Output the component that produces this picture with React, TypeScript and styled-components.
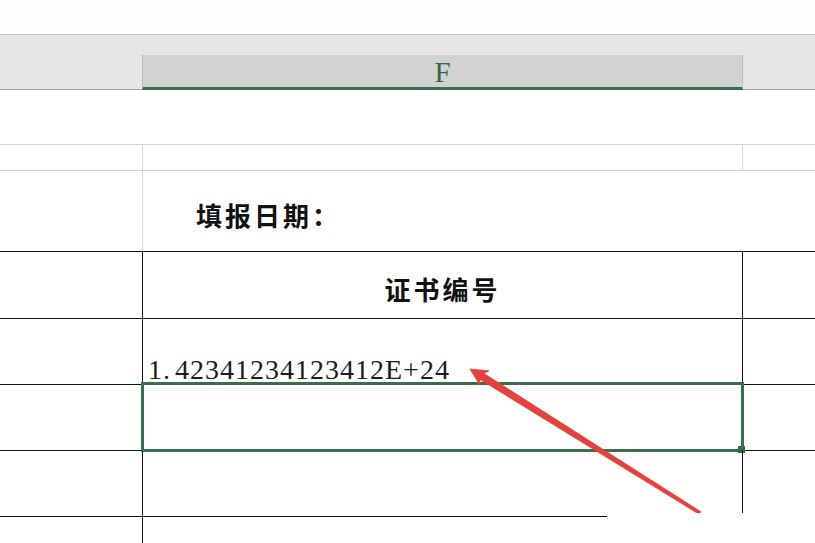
import React from "react";
import styled, { createGlobalStyle } from "styled-components";

const GlobalStyle = createGlobalStyle`
  html, body {
    margin: 0;
    padding: 0;
    background: #ffffff;
    overflow: hidden;
  }
`;

const LIGHT = "#d3d3d3";
const DARK = "#111111";
const GREEN = "#3c6d4f";

type Edge = "none" | "light" | "dark";
const edgeColor = (e: Edge) => (e === "dark" ? DARK : e === "light" ? LIGHT : "transparent");

const Sheet = styled.div`
  position: relative;
  width: 815px;
  height: 543px;
  overflow: hidden;
  background: #ffffff;
`;

const Ribbon = styled.div`
  height: 34px;
  background: #fdfdfd;
  border-bottom: 1px solid #c7c7c7;
`;

const HeaderBand = styled.div`
  display: grid;
  grid-template-columns: 142px 601px 1fr;
  height: 55px;
  background: #e6e6e6;
`;

const HeaderBlank = styled.div`
  border-bottom: 1px solid #a3a3a3;
`;

const ColumnHeader = styled.div`
  margin-top: 20px;
  box-sizing: border-box;
  background: #d2d2d2;
  border-left: 1px solid #bcbcbc;
  border-right: 1px solid #bcbcbc;
  border-bottom: 3px solid ${GREEN};
  display: flex;
  align-items: center;
  justify-content: center;
  font-family: "Liberation Serif", serif;
  font-size: 29px;
  line-height: 1;
  color: #3a6449;
  padding-top: 2px;
`;

const Row = styled.div<{ $h: number; $line: Edge }>`
  display: grid;
  grid-template-columns: 143px 600px 1fr;
  box-sizing: border-box;
  height: ${(p) => p.$h}px;
  border-bottom: 1px solid ${(p) => edgeColor(p.$line)};
`;

const Cell = styled.div<{ $edge?: Edge; $span?: number }>`
  position: relative;
  box-sizing: border-box;
  display: flex;
  min-width: 0;
  border-right: 1px solid ${(p) => edgeColor(p.$edge ?? "none")};
  grid-column: span ${(p) => p.$span ?? 1};
`;

const Label = styled.div<{ $center?: boolean; $indent?: number; $drop?: number }>`
  flex: 1;
  display: flex;
  align-items: center;
  justify-content: ${(p) => (p.$center ? "center" : "flex-start")};
  padding-left: ${(p) => p.$indent ?? 0}px;
  padding-top: ${(p) => p.$drop ?? 0}px;
  font-family: "Noto Sans CJK SC", "Noto Sans", sans-serif;
  font-weight: 700;
  font-size: 26px;
  letter-spacing: 3px;
  color: #111111;
`;

const NumberText = styled.div`
  align-self: flex-end;
  padding-left: 5px;
  font-family: "Liberation Serif", serif;
  font-size: 28px;
  line-height: 1;
  letter-spacing: 1px;
  color: #1c1c1c;
  white-space: nowrap;
`;

const Dot = styled.span`
  margin-right: 4px;
`;

const Selection = styled.div`
  position: absolute;
  top: -3px;
  left: -2px;
  right: -2px;
  bottom: -2px;
  border: 3px solid ${GREEN};
  pointer-events: none;
`;

const FillHandle = styled.div`
  position: absolute;
  right: -4px;
  bottom: -4px;
  width: 7px;
  height: 7px;
  background: #2f6a47;
`;

const Annotation = styled.svg`
  position: absolute;
  left: 0;
  top: 0;
  pointer-events: none;
`;

const Stamp = styled.div`
  position: absolute;
  left: 607px;
  top: 513px;
  width: 208px;
  height: 30px;
  background: #ffffff;
`;

export default function App() {
  return (
    <>
      <GlobalStyle />
      <Sheet>
        <Ribbon />
        <HeaderBand>
          <HeaderBlank />
          <ColumnHeader>F</ColumnHeader>
          <HeaderBlank />
        </HeaderBand>

        <Row $h={55} $line="light">
          <Cell />
          <Cell />
          <Cell />
        </Row>
        <Row $h={26} $line="light">
          <Cell $edge="light" />
          <Cell $edge="light" />
          <Cell />
        </Row>
        <Row $h={81} $line="dark">
          <Cell $edge="light" />
          <Cell $span={2}>
            <Label $indent={53} $drop={6}>填报日期：</Label>
          </Cell>
        </Row>
        <Row $h={67} $line="dark">
          <Cell $edge="dark" />
          <Cell $edge="dark">
            <Label $center $drop={6}>证书编号</Label>
          </Cell>
          <Cell />
        </Row>
        <Row $h={66} $line="dark">
          <Cell $edge="dark" />
          <Cell $edge="dark">
            <NumberText>
              1<Dot>.</Dot>42341234123412E+24
            </NumberText>
          </Cell>
          <Cell />
        </Row>
        <Row $h={66} $line="dark">
          <Cell $edge="dark" />
          <Cell $edge="dark">
            <Selection>
              <FillHandle />
            </Selection>
          </Cell>
          <Cell />
        </Row>
        <Row $h={66} $line="dark">
          <Cell $edge="dark" />
          <Cell $edge="dark" />
          <Cell />
        </Row>
        <Row $h={27} $line="none">
          <Cell $edge="dark" />
          <Cell $edge="dark" />
          <Cell />
        </Row>

        <Annotation width="815" height="543" viewBox="0 0 815 543">
          <polygon
            points="470,369 488.9,370.8 483.8,373.4 700.8,511.7 699.2,514.3 480,379.4 479.9,385.2"
            fill="#e6423d"
            stroke="#e6423d"
            strokeWidth="0.8"
            strokeLinejoin="round"
          />
        </Annotation>
        <Stamp />
      </Sheet>
    </>
  );
}
